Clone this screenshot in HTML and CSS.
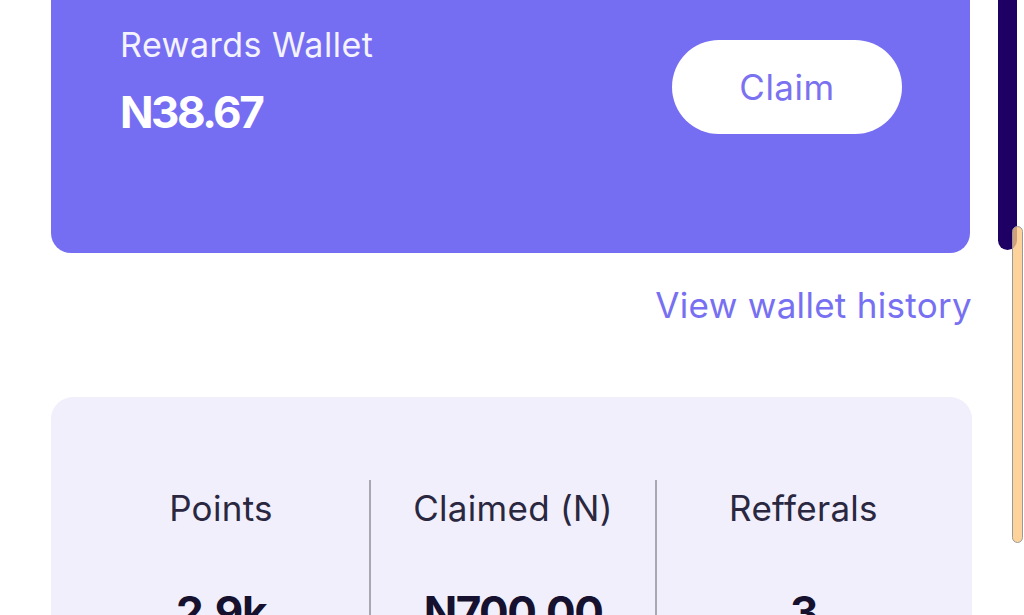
FILE: index.html
```html
<!DOCTYPE html>
<html lang="en">
<head>
<meta charset="utf-8">
<title>Rewards</title>
<link rel="stylesheet" href="styles.css">
</head>
<body>
<div class="page">
  <main class="main">
    <section class="wallet-card">
      <div class="wallet-info">
        <div class="wallet-title">Rewards Wallet</div>
        <div class="wallet-amount">N38.67</div>
      </div>
      <button class="claim-btn">Claim</button>
    </section>
    <div class="history-row">
      <a class="history-link" href="#">View wallet history</a>
    </div>
    <section class="stats-card">
      <div class="stat">
        <div class="stat-label">Points</div>
        <div class="stat-value">2.9k</div>
      </div>
      <div class="stat stat-divided">
        <div class="stat-label">Claimed (N)</div>
        <div class="stat-value">N700.00</div>
      </div>
      <div class="stat stat-divided">
        <div class="stat-label">Refferals</div>
        <div class="stat-value">3</div>
      </div>
    </section>
  </main>
  <aside class="side">
    <div class="side-panel"></div>
  </aside>
  <div class="scroll-thumb"></div>
</div>
</body>
</html>
```
FILE: styles.css
```css
html, body {
  margin: 0;
  padding: 0;
  background: #ffffff;
  overflow: hidden;
}
body {
  font-family: "Inter", "Open Sans", "Liberation Sans", sans-serif;
  width: 1024px;
  height: 615px;
}
.page {
  display: flex;
  align-items: flex-start;
  position: relative;
  height: 615px;
  overflow: hidden;
}
.main {
  width: 921px;
  margin-left: 51px;
  display: flex;
  flex-direction: column;
  flex-shrink: 0;
}
.main > * {
  flex-shrink: 0;
}
.wallet-card {
  margin-top: -40px;
  height: 293px;
  box-sizing: border-box;
  width: 919px;
  background: #756ef3;
  border-radius: 20px;
  padding: 65px 68px 0 69px;
  display: flex;
  justify-content: space-between;
  align-items: flex-start;
}
.wallet-title {
  color: #f4f3ff;
  font-size: 34px;
  line-height: 39px;
  letter-spacing: 0.5px;
}
.wallet-amount {
  margin-top: 22px;
  color: #ffffff;
  font-size: 44px;
  font-weight: 700;
  line-height: 53px;
  letter-spacing: -2.5px;
}
.claim-btn {
  margin-top: 15px;
  width: 230px;
  height: 94px;
  border: none;
  border-radius: 47px;
  background: #ffffff;
  color: #7a72f1;
  font-family: inherit;
  font-size: 35px;
  letter-spacing: 0.5px;
  padding: 0;
}
.history-row {
  display: flex;
  justify-content: flex-end;
  margin-top: 33px;
}
.history-link {
  color: #7770f2;
  text-decoration: none;
  font-size: 35px;
  line-height: 39px;
  letter-spacing: 0.3px;
  margin-right: 0;
}
.stats-card {
  margin-top: 72px;
  background: #f1effb;
  border-radius: 22px;
  padding: 83px 22px 0 22px;
  height: 300px;
  box-sizing: border-box;
  display: grid;
  grid-template-columns: 296px 286px 295px;
}
.stat {
  display: flex;
  flex-direction: column;
  align-items: center;
  padding-top: 8px;
}
.stat-divided {
  border-left: 2px solid #a9a7b2;
}
.stat-label {
  color: #2a2740;
  font-size: 35px;
  line-height: 40px;
  letter-spacing: 0.3px;
}
.stat-value {
  margin-top: 58px;
  color: #15112e;
  font-size: 44px;
  font-weight: 700;
  line-height: 53px;
  letter-spacing: -1.5px;
}
.side {
  margin-left: 26px;
  width: 19px;
  flex-shrink: 0;
  display: flex;
  flex-direction: column;
}
.side-panel {
  margin-top: -40px;
  height: 290px;
  background: #1e0064;
  border-radius: 0 0 20px 20px;
}
.scroll-thumb {
  position: absolute;
  left: 1012px;
  top: 226px;
  width: 9px;
  height: 315px;
  background: rgba(252, 200, 130, 0.8);
  border: 1px solid #9a9a9a;
  border-radius: 6px;
}
```
